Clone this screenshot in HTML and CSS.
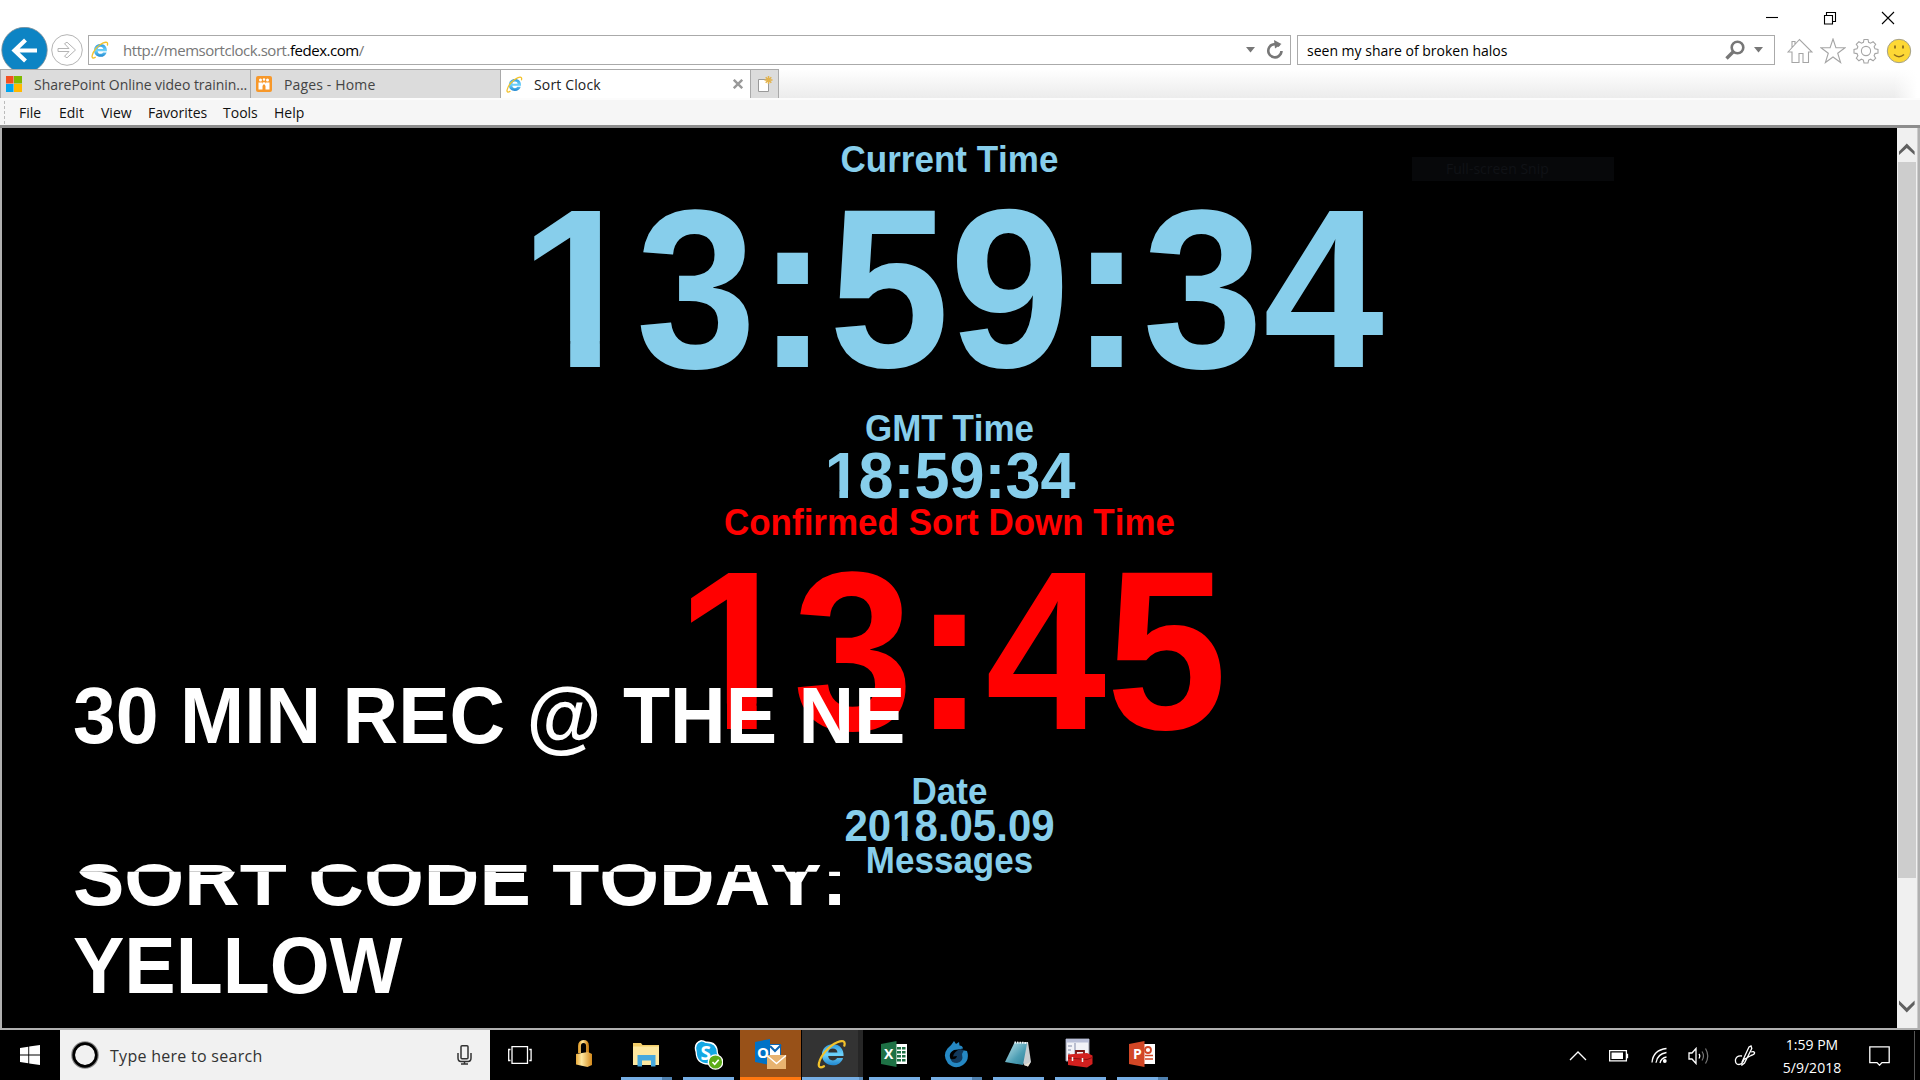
FILE: index.html
```html
<!DOCTYPE html>
<html lang="en">
<head>
<meta charset="utf-8">
<title>Sort Clock</title>
<link rel="stylesheet" href="styles.css">
</head>
<body>
<svg class="defs" width="0" height="0" aria-hidden="true">
  <defs>
    <linearGradient id="ieBlue" x1="0" y1="0" x2="0" y2="1"><stop offset="0" stop-color="#2f9be0"/><stop offset=".5" stop-color="#6fd3fb"/><stop offset="1" stop-color="#1f86cf"/></linearGradient>
    <linearGradient id="gold" x1="0" y1="0" x2="1" y2="0"><stop offset="0" stop-color="#e8a93a"/><stop offset=".35" stop-color="#ffe9a0"/><stop offset="1" stop-color="#d48a1c"/></linearGradient>
    <linearGradient id="glass" x1="0" y1="0" x2="1" y2="1"><stop offset="0" stop-color="#c4e6ec"/><stop offset=".6" stop-color="#4e9fb5"/><stop offset="1" stop-color="#2c7f98"/></linearGradient>
    <symbol id="ie" viewBox="0 0 28 28">
      <path d="M24.8 15.9H10.4c.2 2.6 2 4.1 4.3 4.1 1.800 0 3.200-.8 4-2.300h5.600c-1.200 4.300-5 6.900-9.600 6.900C8.800 24.600 4.600 20.500 4.600 14.800 4.600 9 8.900 4.800 14.800 4.800c6.200 0 10.400 4.400 10 11.100zM10.500 12.600h8.600c-.2-2.300-1.900-3.700-4.300-3.700s-4.100 1.500-4.300 3.700z" fill="url(#ieBlue)"/>
      <path d="M6.500 25.400c-3.400 2-5.600 1-4.600-2.900C3.100 16 11 6.300 19 3c4.800-2 7.800-1.300 6.500 3.200" fill="none" stroke="#f3c22b" stroke-width="2.100" stroke-linecap="round"/>
    </symbol>
  </defs>
</svg>

<header class="browser">
  <div class="window-controls">
    <svg width="14" height="14" viewBox="0 0 14 14"><path d="M1 6.500h12" class="ink"/></svg>
    <svg width="14" height="14" viewBox="0 0 14 14"><path d="M1.500 4.500h8v8.500h-8zM3.500 4.500v-3h9v9h-3" class="ink"/></svg>
    <svg width="14" height="14" viewBox="0 0 14 14"><path d="M1 1l12 12M13 1L1 13" class="ink"/></svg>
  </div>

  <div class="nav-row">
    <svg class="back" width="48" height="42" viewBox="0 0 48 42"><circle cx="24.500" cy="23" r="22.700" fill="#0d84c4" stroke="#7d8d96" stroke-width=".8"/><path d="M37 23.500H15M25.500 13L14.500 23.500l11 10.500" fill="none" stroke="#fff" stroke-width="4.200"/></svg>
    <svg class="forward" width="32" height="32" viewBox="0 0 32 32"><circle cx="16" cy="16" r="15.300" fill="#fff" stroke="#b4b4b4"/><path d="M7 14.500h11l-4.500-4.800 2.500-1.500 8.500 7.800-8.500 7.800-2.500-1.500 4.500-4.800H7z" fill="#fff" stroke="#b4b4b4"/></svg>
    <div class="address-box">
      <svg class="site" width="18" height="18"><use href="#ie"/></svg>
      <span class="url">http://memsortclock.sort.<b>fedex.com</b>/</span>
      <svg class="drop" width="9" height="6" viewBox="0 0 9 6"><path d="M0 0h9L4.500 5.500z" fill="#777"/></svg>
      <svg width="18" height="20" viewBox="0 0 18 20"><path d="M13.500 6A6.600 6.600 0 1 0 15.500 11" fill="none" stroke="#777" stroke-width="2.600"/><path d="M8 0l7.500 4L9 8.500z" fill="#777"/></svg>
    </div>
    <div class="search-box">
      <span class="query">seen my share of broken halos</span>
      <svg width="20" height="20" viewBox="0 0 20 20"><circle cx="12.500" cy="7.500" r="5.800" fill="none" stroke="#777" stroke-width="2.600"/><path d="M8.500 11.500L1.500 18.500" stroke="#777" stroke-width="3.400"/></svg>
      <svg class="drop" width="9" height="6" viewBox="0 0 9 6"><path d="M0 0h9L4.500 5.500z" fill="#777"/></svg>
    </div>
    <div class="tools">
      <svg width="26" height="26" viewBox="0 0 26 26"><path d="M1 14L12.500 1.500 25 14h-3.500v10.500h-5.500v-9h-4v9H5V14zM5 9.500V3.500h3v3" class="outline"/></svg>
      <svg width="26" height="26" viewBox="0 0 26 26"><path d="M13 1l2.900 8.700H25l-7.300 5.500 2.900 9.300L13 19l-7.600 5.500 2.900-9.300L1 9.700h9.100z" class="outline"/></svg>
      <svg width="26" height="26" viewBox="0 0 26 26"><path d="M11 1.500h4l.6 2.800 2 .9 2.500-1.600 2.600 2.700-1.600 2.400.9 2.100 3 .6v3.600l-3 .6-.9 2.100 1.600 2.500-2.600 2.600-2.500-1.600-2 .9-.6 2.900h-4l-.6-2.900-2-.9-2.500 1.600-2.600-2.600 1.600-2.500-.9-2.100-3-.6v-3.600l3-.6.9-2.100-1.600-2.400 2.600-2.700 2.500 1.600 2-.9z" class="outline"/><circle cx="13" cy="13" r="4.600" class="outline"/></svg>
      <svg width="26" height="26" viewBox="0 0 26 26"><circle cx="13" cy="13" r="11.700" fill="#fdd835" stroke="#a4a08a"/><path d="M9 7.500v3M17 7.500v3" stroke="#8a6a1c" stroke-width="1.800"/><path d="M8 16.500q5 4.500 10 0" fill="none" stroke="#8a6a1c" stroke-width="1.500"/></svg>
    </div>
  </div>

  <div class="tab-row">
    <div class="tab">
      <svg width="16" height="16" viewBox="0 0 16 16"><path d="M0 0h7.500v7.500H0z" fill="#f25022"/><path d="M8 0h8v7.500H8z" fill="#7fba00"/><path d="M0 8h7.500v8H0z" fill="#00a4ef"/><path d="M8 8h8v8H8z" fill="#ffb900"/></svg>
      <span class="label label-sharepoint">SharePoint Online video trainin...</span>
    </div>
    <div class="tab">
      <svg width="16" height="16" viewBox="0 0 16 16"><rect width="16" height="16" rx="2" fill="#f7982a"/><path d="M2.500 6.500h4v7h-4zM9.500 6.500h4v7h-4z" fill="#fff"/><path d="M5.500 9.500L8 7l2.500 2.500" fill="none" stroke="#fff" stroke-width="1.600"/><circle cx="4.500" cy="4" r="1.500" fill="#fff"/><circle cx="11.500" cy="4" r="1.500" fill="#fff"/><circle cx="8" cy="3.500" r="1.200" fill="#fff"/></svg>
      <span class="label">Pages - Home</span>
    </div>
    <div class="tab active">
      <svg width="17" height="17"><use href="#ie"/></svg>
      <span class="label">Sort Clock</span>
      <svg class="close" width="10" height="10" viewBox="0 0 10 10"><path d="M.8.8l8.400 8.400M9.200.8L.8 9.200" stroke="#999" stroke-width="2.400"/></svg>
    </div>
    <div class="new-tab">
      <svg width="16" height="16" viewBox="0 0 16 16"><path d="M1.500 3.500h10v12h-10z" fill="#fff" stroke="#999"/><path d="M11.500 0v8M7.500 4h8M8.700 1.200l5.600 5.600M14.300 1.200L8.700 6.800" stroke="#e3b34c" stroke-width="1.500"/></svg>
    </div>
    <div class="tab-rest"></div>
  </div>

  <nav class="menu">
    <i class="grip"></i>
    <span class="m-file">File</span><span class="m-edit">Edit</span><span class="m-view">View</span><span class="m-fav">Favorites</span><span class="m-tools">Tools</span><span>Help</span>
  </nav>
</header>

<main class="viewport">
  <section class="clock">
    <h2 class="title first">Current Time</h2>
    <p class="huge"><span class="one">1</span>3:59:34</p>
    <h2 class="title spaced">GMT Time</h2>
    <p class="gmt"><span class="one">1</span>8:59:34</p>
    <h2 class="title red sort-title">Confirmed Sort Down Time</h2>
    <p class="huge red sort-time"><span class="one">1</span>3:45</p>
    <h2 class="title spaced">Date</h2>
    <p class="date">20<span class="one">1</span>8.05.09</p>
    <h2 class="title messages">Messages</h2>
    <div class="snip">Full-screen Snip</div>
    <div class="ticker">
      <p class="msg">30 MIN REC @ THE NE</p>
      <p class="msg torn" data-text="SORT CODE TODAY:"><span>SORT CODE TODAY:</span></p>
      <p class="msg">YELLOW</p>
    </div>
  </section>
  <aside class="scrollbar">
    <svg width="18" height="14" viewBox="0 0 18 14"><path d="M1 9.500L8.800 1.500l7.800 8V13L8.800 6 1 13z" fill="#606060"/></svg>
    <i class="thumb"></i>
    <svg class="down" width="18" height="14" viewBox="0 0 18 14"><path d="M1 .5v4l7.800 8 7.800-8v-4L8.800 8z" fill="#606060"/></svg>
  </aside>
</main>

<footer class="taskbar">
  <div class="start"><svg width="20" height="20" viewBox="0 0 20 20"><path d="M0 3l8.300-1.200v7.700H0zM9.200 1.600L20 0v9.500H9.200zM0 10.400h8.300v7.800L0 17zM9.200 10.400H20V20L9.200 18.400z" fill="#fff"/></svg></div>
  <div class="cortana">
    <svg width="28" height="28" viewBox="0 0 28 28"><circle cx="14" cy="14" r="12" fill="none" stroke="#8a8a8a" stroke-width="3.600"/><circle cx="14" cy="14" r="11.300" fill="none" stroke="#000" stroke-width="2.700"/></svg>
    <span class="hint">Type here to search</span>
    <svg width="15" height="20" viewBox="0 0 15 20"><rect x="4" y=".8" width="7" height="13" rx="1" class="mic"/><path d="M1 8v5q0 3.500 3 3.500h7q3 0 3-3.500V8M7.500 16.500V19M4 19h7" class="mic"/></svg>
  </div>
  <div class="task view"><svg width="24" height="18" viewBox="0 0 24 18"><path d="M4 .7h15.500v16.600H4zM2.500 3.500H.7v11h1.800M21.300 3.500h1.800v11h-1.800" fill="none" stroke="#fff" stroke-width="1.300"/></svg></div>
  <div class="task"><svg width="18" height="27" viewBox="0 0 18 27"><path d="M4.500 13V6q0-4.500 4-4.500t4 4.500v7" fill="none" stroke="url(#gold)" stroke-width="2.800"/><path d="M1 14l12-2 4 2v11l-4.500 2L1 24.500z" fill="url(#gold)"/></svg></div>
  <div class="task run grouped"><svg width="28" height="25" viewBox="0 0 28 25"><path d="M1 1h8l1.500 2H27v20H1z" fill="#f2cd68"/><path d="M1 4.500h26V23H1z" fill="#fde8a0"/><path d="M5.500 13h18v11.500h-4.500v-6h-9v6H5.500z" fill="#46a9de"/></svg></div>
  <div class="task run"><svg width="30" height="31" viewBox="0 0 30 31"><path d="M8 1q3 0 5 1.500Q25 2 25 14q2 3 1 7-2 5-8 4.500Q3 27 2.500 13-.5 4 8 1z" fill="#fff"/><path d="M8.500 2.500q2.500 0 4 1.500Q23.500 3.500 23.800 14q1.500 3 .7 6-2 4.500-7 4Q4 25.500 3.800 13 1 5 8.500 2.500z" fill="#14a8e4"/><text x="7.500" y="20.500" class="glyph" font-size="19" fill="#fff">S</text><circle cx="22.500" cy="23" r="7.200" fill="#5cac18" stroke="#fff" stroke-width="1.300"/><path d="M19.500 23l2.200 2.300 4-4.500" fill="none" stroke="#fff" stroke-width="1.700"/></svg></div>
  <div class="task run outlook"><svg width="34" height="32" viewBox="0 0 34 32"><path d="M15 6h13v16H15z" fill="#0d66b4"/><path d="M17 7h10v10H17z" fill="#fff"/><path d="M17 8l5 5 6-6" fill="none" stroke="#0d66b4" stroke-width="2"/><path d="M2 4l15-3v26L2 24z" fill="#0072c6"/><text x="4" y="20" class="glyph" font-size="15" fill="#fff">O</text><path d="M14 17h19v14H14z" fill="#e8b370"/><path d="M14 17.500l9.500 8 9.500-8" fill="none" stroke="#fff" stroke-width="1.400"/></svg></div>
  <div class="task run browser-task"><svg width="30" height="30"><use href="#ie"/></svg></div>
  <div class="task run"><svg width="28" height="28" viewBox="0 0 28 28"><path d="M14 4h13v20H14z" fill="#fff"/><path d="M17 7h4v2.500h-4zM22 7h3.500v2.500H22zM17 11h4v2.500h-4zM22 11h3.500v2.500H22zM17 15h4v2.500h-4zM22 15h3.500v2.500H22zM17 19h4v2.500h-4zM22 19h3.500v2.500H22z" fill="#1e7145"/><path d="M1 4l15.500-3v26L1 24z" fill="#1e7145"/><text x="4" y="19" class="glyph" font-size="14" fill="#fff">X</text></svg></div>
  <div class="task run grouped"><svg width="26" height="28" viewBox="0 0 26 28"><path d="M11 1l2 3 3-2 .5 3.500q3 0 3.500 3l-5 1-4 .5Q5 13 7.500 19q3 4.500 8.500 2 3.500-3 2-7l1-4 5 1q3 9-4 14-8 5-15-1.500-6-8-.5-15Q8 6 11 1z" fill="#2588c4"/><path d="M17 9l4 1-2 4q2 8-5 9-6 0-6-4 5 1 6-3l-4 .5q1-5 7-7.500z" fill="#12395c"/></svg></div>
  <div class="task run"><svg width="28" height="28" viewBox="0 0 28 28"><path d="M10 3l14-1 3 20-3 4.500L20 25z" fill="#c8cdd0"/><path d="M10.500 2.500L23 3.500 19 25 1 22z" fill="url(#glass)"/><path d="M10.500 2.500l13 .5" stroke="#eef6f8" stroke-width="2" stroke-dasharray="1.500 1"/><path d="M20 25l4 1.500L26.500 22" fill="#e9e1d2"/></svg></div>
  <div class="task run toolbox"><svg width="28" height="30" viewBox="0 0 28 30"><path d="M1 1h23v22H1z" fill="#f2f3f8" stroke="#9296a6"/><path d="M1 1h23v3.500H1z" fill="#b9bfd8"/><path d="M3 8h4M3 12h3M3 16h2M10 5v12" stroke="#8189a8"/><path d="M11 16v-3h8v3" fill="none" stroke="#7a1512" stroke-width="1.800"/><path d="M3 16.500L22 15l5.500 2.500v8.500L22 29.500 3 27z" fill="#d3201f"/><path d="M3 20l19 1.500 5.500-2" fill="none" stroke="#8f1010"/><path d="M7.500 19v4M17.500 20v4" stroke="#eee" stroke-width="1.500"/></svg></div>
  <div class="task run grouped"><svg width="28" height="28" viewBox="0 0 28 28"><path d="M14 4h13v20H14z" fill="#fff"/><circle cx="20" cy="10" r="3" fill="none" stroke="#d24726" stroke-width="1.800"/><path d="M17 15.500h8M17 19h8" stroke="#d24726" stroke-width="1.700"/><path d="M1 4l15.500-3v26L1 24z" fill="#d24726"/><text x="5" y="19" class="glyph" font-size="14" fill="#fff">P</text></svg></div>
  <div class="tray">
    <svg width="18" height="10" viewBox="0 0 18 10"><path d="M1 9l8-8 8 8" class="line"/></svg>
    <svg width="20" height="12" viewBox="0 0 20 12"><path d="M.6.6h16.800v10.300H.6zM18.500 3.800v4.400" class="line"/><path d="M2.500 2.500H14V9H2.500z" fill="#fff"/></svg>
    <svg width="17" height="17" viewBox="0 0 17 17"><path d="M1 15.500Q2 3 15.500 1.500M5 15.800Q6 7 15.500 5.500M9 16q1-5 6.500-6" class="line"/><circle cx="13.800" cy="14" r="1.900" fill="#fff"/></svg>
    <svg class="volume" width="22" height="18" viewBox="0 0 22 18"><path d="M1 6h3l4-4.500v15L4 12H1zM11 7q1.500 2 0 4.500" class="line"/><path d="M14 4.500q3 4.500 0 9M17.500 1.500q4.500 7.500 0 15" fill="none" stroke="#777" stroke-width="1.200"/></svg>
    <svg width="22" height="21" viewBox="0 0 22 21"><path d="M8 17L15 2l2-1 .8 2.500L10.500 18 8 20zM8 11q-5-1-6.500 3.500Q1 19.500 5 19.500q3 0 5-5l7-4q4-1 3.500-3Q20 6 17 7" class="line"/></svg>
    <div class="clock-text"><span>1:59 PM</span><span class="day">5/9/2018</span></div>
    <svg width="21" height="20" viewBox="0 0 21 20"><path d="M.8.8h19.400v15.800H13l-2.500 2.600L8 16.600H.8z" class="line"/></svg>
    <i class="peek"></i>
  </div>
</footer>
</body>
</html>
```
FILE: styles.css
```css
* { box-sizing: border-box; margin: 0; padding: 0; }
html, body { width: 1920px; height: 1080px; overflow: hidden; background: #000; }
body { display: flex; flex-direction: column; font-family: "Open Sans", "Noto Sans", sans-serif; font-size: 14px; color: #1a1a1a; }
svg { display: block; flex: none; }
.defs { position: absolute; }
.ink { fill: none; stroke: #000; stroke-width: 1.1; }
.outline { fill: #fff; stroke: #a5a5a5; stroke-width: 1.1; }
.line { fill: none; stroke: #fff; stroke-width: 1.3; }
.mic { fill: none; stroke: #333; stroke-width: 1.5; }
.glyph { font-family: "Open Sans", sans-serif; font-weight: 700; }

.browser { height: 128px; background: #fff; border-bottom: 3px solid #8d8d8d; }
.window-controls { height: 27px; display: flex; justify-content: flex-end; gap: 44px; padding: 11px 25px 0 0; }
.nav-row { height: 42px; display: flex; align-items: flex-start; }
.back { margin-right: 3px; }
.forward { margin-top: 7px; }
.address-box, .search-box { height: 30px; margin-top: 8px; border: 1px solid #aaa; display: flex; align-items: center; background: #fff; }
.address-box { width: 1203px; margin-left: 5px; padding: 0 6px 0 2px; }
.url { flex: 1; margin-left: 14px; color: #777; font-size: 15px; letter-spacing: -0.46px; }
.url b { font-weight: 400; color: #000; }
.address-box .drop { margin-right: 11px; }
.search-box { width: 478px; margin-left: 6px; padding: 0 11px 0 9px; }
.query { flex: 1; color: #000; }
.search-box .drop { margin-left: 9px; }
.tools { display: flex; gap: 7px; margin: 11px 0 0 12px; }

.tab-row { height: 29px; display: flex; }
.tab { width: 250px; border: 1px solid #a9a9a9; border-width: 1px 0 0 1px; background: #dcdcdc; display: flex; align-items: center; padding-left: 5px; color: #444; }
.tab .label { margin-left: 12px; white-space: nowrap; flex: 1; letter-spacing: 0.15px; }
.tab .label-sharepoint { letter-spacing: -0.04px; }
.tab.active { background: #fff; color: #222; }
.tab.active .label { margin-left: 11px; }
.tab .close { margin-right: 7px; }
.new-tab { width: 29px; border: 1px solid #a9a9a9; border-bottom: 0; background: #dcdcdc; padding: 6px 0 0 6px; }
.tab-rest { flex: 1; background: linear-gradient(90deg, transparent 1115px, #fff 1138px), linear-gradient(#fff, #ececec); }

.menu { height: 27px; background: #f6f6f6; border-top: 2px solid #fcfcfc; display: flex; align-items: center; color: #111; white-space: nowrap; }
.menu .grip { width: 1px; height: 23px; margin: 0 14px 0 4px; border-left: 1px dashed #bbb; }
.menu span { width: 32px; }
.menu .m-file { width: 40px; }
.menu .m-edit { width: 42px; }
.menu .m-view { width: 47px; }
.menu .m-fav { width: 75px; }
.menu .m-tools { width: 51px; }

.viewport { height: 902px; display: flex; border: solid #b0b0b0; border-width: 0 2px 2px; background: #000; }
.clock { position: relative; flex: 1; overflow: hidden; padding-top: 12px; text-align: center; font-family: "Liberation Sans", Arial, sans-serif; font-weight: 700; font-kerning: none; color: #87ceeb; }
.clock p, .clock h2 { font-weight: 700; white-space: nowrap; transform: scaleY(1.04); }
.clock .title { font-size: 35px; height: 40px; line-height: 40px; transform-origin: 50% 32px; }
.clock .spaced { margin-top: 5px; }
.clock .huge { font-size: 217px; height: 224px; line-height: 224px; transform-origin: 50% 187px; }
.clock .gmt { font-size: 63px; height: 54px; line-height: 54px; transform-origin: 50% 49px; }
.clock .sort-title { height: 39px; line-height: 39px; }
.clock .sort-time { height: 225px; line-height: 225px; }
.clock .date { font-size: 42px; height: 29px; line-height: 29px; transform-origin: 50% 29px; }
.clock .messages { height: 39px; line-height: 39px; }
.clock .red { color: #f00; }

/* numeral one drawn without its base serif */
.one {
  display: inline-block;
  vertical-align: top;
  transform: translateX(0.02em);
  clip-path: polygon(0 0, 100% 0, 100% calc(50% + 0.23em), 66.6% calc(50% + 0.23em), 66.6% 100%, 42% 100%, 42% calc(50% + 0.23em), 0 calc(50% + 0.23em));
}

.snip { position: absolute; left: 1410px; top: 29px; width: 202px; height: 24px; padding-left: 34px; background: #07080a; color: #101216; font: 400 14px/24px "Open Sans", sans-serif; text-align: left; }
.ticker { position: absolute; left: 71px; top: 544px; color: #fff; text-align: left; }
.clock .msg { font-size: 77px; height: 88px; line-height: 88px; transform-origin: 0 71px; }
.clock .torn { position: relative; margin: 74px 0 0; }
.torn span { display: block; clip-path: inset(39px -20px 0 0); }
.torn::before { content: attr(data-text); position: absolute; left: 0; top: 14.4px; clip-path: inset(0 -20px 63.4px 0); }

.scrollbar { width: 21px; background: #f0f0f0; border-right: 1px solid #ccc; display: flex; flex-direction: column; padding: 14px 1px 14px; }
.thumb { height: 716px; margin-top: 6px; background: #cdcdcd; }
.down { margin-top: auto; }

.taskbar { height: 50px; display: flex; background: #000; }
.start { width: 60px; padding: 15px 0 0 20px; }
.cortana { width: 430px; background: #f1f1f1; display: flex; align-items: center; padding: 0 18px 0 11px; }
.hint { flex: 1; margin-left: 11px; padding-top: 1px; font-size: 16px; letter-spacing: 0.28px; color: #333; }
.task { width: 62px; display: flex; align-items: center; justify-content: center; border-bottom: 3px solid transparent; }
.task.view { width: 60px; margin-right: 3px; border: 0; }
.task.run { border-bottom: 0; padding: 0 1px 2px 0; background: linear-gradient(#76aee4, #76aee4) 6px 47px / 51px 3px no-repeat; }
.task.grouped { background: linear-gradient(90deg, #76aee4 41px, #4f80ae 41px) 6px 47px / 51px 3px no-repeat; }
.task.outlook { padding-left: 1px; background: linear-gradient(#ff7810, #ff7810) 1px 47px / 61px 3px no-repeat, linear-gradient(90deg, #000 1px, #985118 1px); }
.task.browser-task { background: linear-gradient(90deg, #76aee4 57px, #5b8dbd 57px) 1px 47px / 61px 3px no-repeat, linear-gradient(90deg, #000 1px, #333 1px 57px, #262626 57px); }
.task.toolbox { padding: 0 3px 4px 0; }
.tray { flex: 1; display: flex; align-items: center; justify-content: flex-end; color: #fff; gap: 22px; padding: 1px 5px 0 0; }
.volume { margin: 0 2px 0 -2px; }
.clock-text { display: flex; flex-direction: column; width: 68px; margin-right: 1px; align-items: center; line-height: 23px; white-space: nowrap; }
.peek { width: 1px; height: 50px; margin-left: 2px; background: #555; }
```
